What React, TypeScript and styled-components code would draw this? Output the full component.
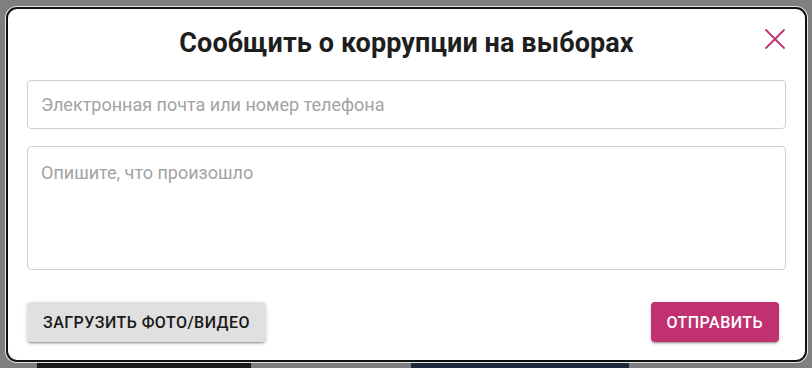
import React from "react";
import styled, { createGlobalStyle } from "styled-components";

const GlobalStyle = createGlobalStyle`
  html, body {
    margin: 0;
    padding: 0;
    background: #7f7f7f;
    overflow: hidden;
    font-family: Roboto, "Liberation Sans", Arial, sans-serif;
  }
`;

const Page = styled.div`
  width: 812px;
  height: 368px;
  display: flex;
  flex-direction: column;
  padding: 7px 5px 0 6px;
  box-sizing: border-box;
`;

const Dialog = styled.div`
  width: 801px;
  height: 355px;
  box-sizing: border-box;
  background: #fff;
  border: 2px solid #111;
  border-radius: 11px;
  box-shadow: 0 0 0 1px #e6e6e6;
  display: flex;
  flex-direction: column;
  padding: 19px 19px 0 19px;
  position: relative;
  z-index: 1;
`;

const Header = styled.div`
  position: relative;
  display: flex;
  justify-content: center;
`;

const Title = styled.h2`
  margin: 0;
  font-size: 27px;
  line-height: 30px;
  font-weight: 700;
  color: #1e1e1e;
  letter-spacing: 0.1px;
`;

const CloseButton = styled.button`
  position: absolute;
  right: -1px;
  top: -1px;
  width: 24px;
  height: 24px;
  padding: 0;
  border: none;
  background: transparent;
  display: flex;
  align-items: center;
  justify-content: center;
  cursor: pointer;
`;

const Field = styled.input`
  margin-top: 22px;
  width: 100%;
  height: 49px;
  box-sizing: border-box;
  border: 1px solid #cfcfcf;
  border-radius: 4px;
  padding: 0 13px;
  font-family: inherit;
  font-size: 18px;
  color: #333;
  outline: none;
  &::placeholder {
    color: #a3a3a3;
  }
`;

const Area = styled.textarea`
  margin-top: 17px;
  width: 100%;
  height: 124px;
  box-sizing: border-box;
  border: 1px solid #cfcfcf;
  border-radius: 4px;
  padding: 15px 13px;
  font-family: inherit;
  font-size: 18px;
  line-height: 22px;
  color: #333;
  outline: none;
  resize: none;
  &::placeholder {
    color: #a3a3a3;
  }
`;

const Actions = styled.div`
  margin-top: 32px;
  display: flex;
  justify-content: space-between;
  padding-right: 7px;
`;

const ActionButton = styled.button<{ primary?: boolean }>`
  height: 40px;
  padding: 0 16px;
  border: none;
  border-radius: 4px;
  font-family: inherit;
  font-size: 16px;
  font-weight: 500;
  letter-spacing: 0.45px;
  text-transform: uppercase;
  background: ${(p) => (p.primary ? "#c1306f" : "#e0e0e0")};
  color: ${(p) => (p.primary ? "#fff" : "#1a1a1a")};
  box-shadow: 0 3px 1px -2px rgba(0, 0, 0, 0.2),
    0 2px 2px 0 rgba(0, 0, 0, 0.14), 0 1px 5px 0 rgba(0, 0, 0, 0.12);
  cursor: pointer;
`;

const Backdrop = styled.div`
  display: flex;
  height: 10px;
  margin-top: -4px;
`;

const Photo = styled.div<{ w: number; tone: string; ml?: number }>`
  width: ${(p) => p.w}px;
  margin-left: ${(p) => p.ml ?? 0}px;
  background: ${(p) => p.tone};
`;

const CloseIcon = () => (
  <svg width="22" height="22" viewBox="0 0 22 22">
    <path
      d="M2 2 L20 20 M20 2 L2 20"
      stroke="#c1306f"
      strokeWidth="1.8"
      strokeLinecap="round"
    />
  </svg>
);

export default function App() {
  return (
    <>
      <GlobalStyle />
      <Page>
        <Dialog>
          <Header>
            <Title>Сообщить о коррупции на выборах</Title>
            <CloseButton aria-label="Закрыть">
              <CloseIcon />
            </CloseButton>
          </Header>
          <Field placeholder="Электронная почта или номер телефона" />
          <Area placeholder="Опишите, что произошло" />
          <Actions>
            <ActionButton>Загрузить фото/видео</ActionButton>
            <ActionButton primary>Отправить</ActionButton>
          </Actions>
        </Dialog>
        <Backdrop>
          <Photo w={214} tone="#1c1a18" ml={31} />
          <Photo w={218} tone="#1e2a3a" ml={160} />
        </Backdrop>
      </Page>
    </>
  );
}
